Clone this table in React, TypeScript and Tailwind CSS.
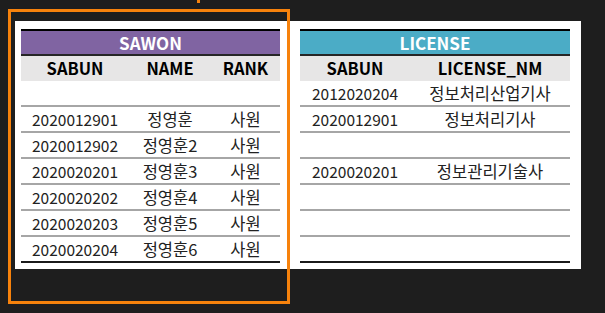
import React from "react";

type Col = { label: string; w: string; size: string };

const sawonCols: Col[] = [
  { label: "SABUN", w: "w-[108px]", size: "text-[15.5px]" },
  { label: "NAME", w: "w-[82px]", size: "text-[16.5px]" },
  { label: "RANK", w: "w-[69px]", size: "text-[16.5px]" },
];

const sawonRows = [
  ["", "", ""],
  ["2020012901", "정영훈", "사원"],
  ["2020012902", "정영훈2", "사원"],
  ["2020020201", "정영훈3", "사원"],
  ["2020020202", "정영훈4", "사원"],
  ["2020020203", "정영훈5", "사원"],
  ["2020020204", "정영훈6", "사원"],
];

const licenseCols: Col[] = [
  { label: "SABUN", w: "w-[110px]", size: "text-[15.5px]" },
  { label: "LICENSE_NM", w: "w-[160px]", size: "text-[16.5px]" },
];

const licenseRows = [
  ["2012020204", "정보처리산업기사"],
  ["2020012901", "정보처리기사"],
  ["", ""],
  ["2020020201", "정보관리기술사"],
  ["", ""],
  ["", ""],
  ["", ""],
];

function Sheet({
  title,
  titleBg,
  cols,
  rows,
}: {
  title: string;
  titleBg: string;
  cols: Col[];
  rows: string[][];
}) {
  return (
    <div className="flex flex-col border-t-2 border-black">
      <div
        className={`flex h-[25px] items-center justify-center border-b-2 border-[#262626] text-[17px] font-bold text-white ${titleBg}`}
      >
        {title}
      </div>
      <div className="flex h-[25px] bg-[#e7e6e6]">
        {cols.map((c) => (
          <div
            key={c.label}
            className={`flex items-center justify-center text-[16.5px] font-bold text-black ${c.w}`}
          >
            {c.label}
          </div>
        ))}
      </div>
      {rows.map((r, i) => (
        <div
          key={i}
          className={`flex h-[26px] border-b-2 ${
            i === rows.length - 1 ? "border-[#1a1a1a]" : "border-[#a6a6a6]"
          }`}
        >
          {r.map((cell, j) => (
            <div
              key={j}
              className={`flex items-center justify-center pt-[1px] text-[#222] ${cols[j].size} ${cols[j].w}`}
            >
              {cell}
            </div>
          ))}
        </div>
      ))}
    </div>
  );
}

export default function App() {
  return (
    <div className="relative h-[313px] w-[605px] overflow-hidden bg-[#1e1e1e] pl-[15px] pt-[21px] font-['Noto_Sans_CJK_KR',sans-serif] leading-none">
      <div className="flex h-[248px] w-[566px] gap-[20px] bg-white pl-[6px] pt-[8px]">
        <Sheet
          title="SAWON"
          titleBg="bg-[#8064a2]"
          cols={sawonCols}
          rows={sawonRows}
        />
        <Sheet
          title="LICENSE"
          titleBg="bg-[#4bacc6]"
          cols={licenseCols}
          rows={licenseRows}
        />
      </div>

      {/* selection outline drawn over the left sheet */}
      <div className="pointer-events-none absolute left-[8px] top-[9px] h-[295px] w-[282px] border-[3px] border-[#f7820c]" />
      <div className="absolute left-[197px] top-0 h-[3px] w-[3px] bg-[#f7820c]" />
    </div>
  );
}
